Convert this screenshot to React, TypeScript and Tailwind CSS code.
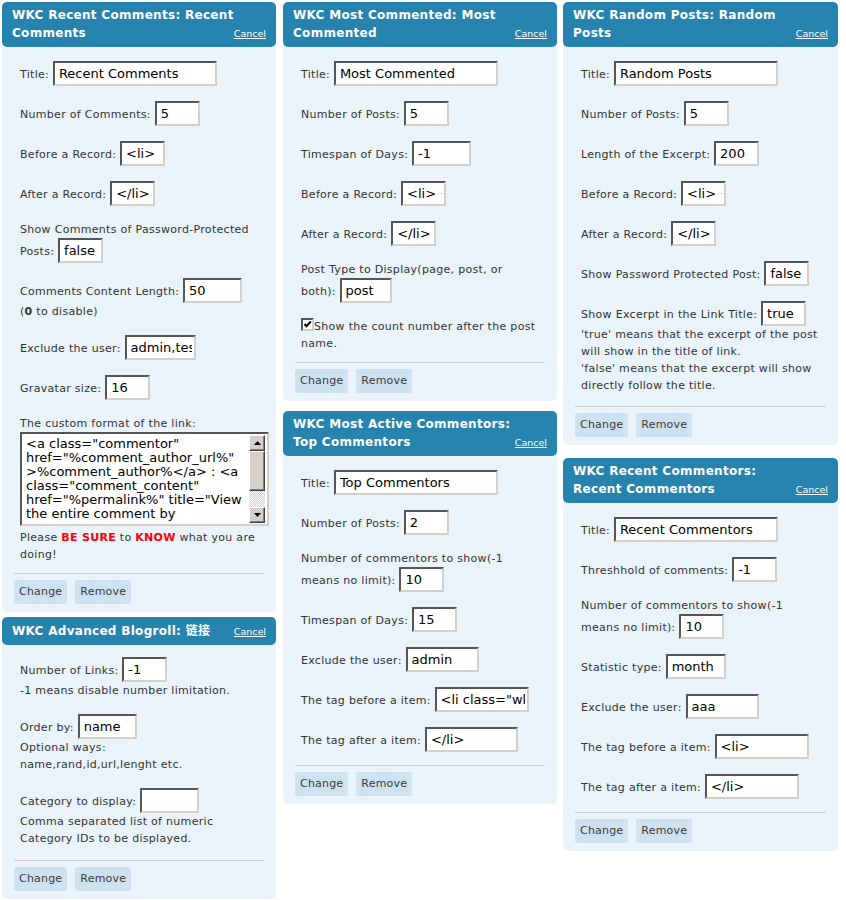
import React from "react";

function Inp({ w, v }: { w: string; v: string }) {
  return (
    <input
      readOnly
      value={v}
      className={`${w} h-[25px] border-2 border-solid border-t-[#555555] border-l-[#555555] border-r-[#d4d0c8] border-b-[#d4d0c8] bg-white pl-[4px] pr-[2px] text-[13px] tracking-normal text-black outline-none`}
    />
  );
}

function Btn({ children }: { children: React.ReactNode }) {
  return (
    <button className="h-[24px] px-[5px] rounded-[3px] bg-[#cee1ef] text-[11px] leading-[24px] tracking-[0.2px] text-[#3a3a3a]">
      {children}
    </button>
  );
}

function Arrow({ up }: { up?: boolean }) {
  return (
    <div className="h-[16px] flex items-center justify-center bg-[#d4d0c8] border border-solid border-t-white border-l-white border-r-[#404040] border-b-[#404040] shadow-[inset_-1px_-1px_#808080]">
      <svg width="7" height="4" viewBox="0 0 7 4">
        {up ? <path d="M3.5 0 L7 4 L0 4 Z" fill="#000" /> : <path d="M0 0 L7 0 L3.5 4 Z" fill="#000" />}
      </svg>
    </div>
  );
}

function FakeTextArea() {
  const text =
    '<a class="commentor"\nhref="%comment_author_url%"\n>%comment_author%</a> : <a\nclass="comment_content"\nhref="%permalink%" title="View\nthe entire comment by';
  return (
    <div className="w-[249px] h-[94px] flex bg-white border-2 border-solid border-t-[#555555] border-l-[#555555] border-r-[#d4d0c8] border-b-[#d4d0c8] mb-[3px]">
      <textarea
        readOnly
        wrap="off"
        value={text}
        className="flex-1 min-w-0 resize-none overflow-hidden whitespace-pre bg-white pl-[4px] pt-[3px] text-[13px] leading-[14px] tracking-normal text-black outline-none"
      />
      <div className="w-[16px] mr-[2px] my-[1px] flex flex-col shrink-0">
        <Arrow up />
        <div className="h-[40px] bg-[#d4d0c8] border border-solid border-t-white border-l-white border-r-[#404040] border-b-[#404040] shadow-[inset_-1px_-1px_#808080]" />
        <div className="flex-1 bg-[repeating-conic-gradient(#d4d0c8_0%_25%,#ffffff_0%_50%)] bg-[length:2px_2px]" />
        <Arrow />
      </div>
    </div>
  );
}

function CheckBox() {
  return (
    <span className="inline-block w-[13px] h-[13px] align-[-1px] bg-white border-2 border-solid border-t-[#555555] border-l-[#555555] border-r-[#d4d0c8] border-b-[#d4d0c8]">
      <svg width="9" height="9" viewBox="0 0 9 9" className="block">
        <path d="M1.5 4 L3.5 6.2 L7.8 1.5" stroke="#000" strokeWidth="2" fill="none" />
      </svg>
    </span>
  );
}

function Panel({
  title,
  children,
  dividerMt,
  bodyPt = "pt-[14px]",
  headerPad = "pt-[4px] pb-[5px]",
  extra = "",
}: {
  title: React.ReactNode;
  children: React.ReactNode;
  dividerMt: string;
  bodyPt?: string;
  headerPad?: string;
  extra?: string;
}) {
  return (
    <div className={`bg-[#eaf3fa] rounded-[5px] ${extra}`}>
      <div className={`bg-[#2683ae] rounded-[5px] px-[10px] ${headerPad} flex items-end justify-between text-white`}>
        <div className="font-bold text-[12px] leading-[18px] tracking-[0.3px] whitespace-nowrap">{title}</div>
        <a className="text-[9.5px] leading-[16px] underline cursor-pointer">Cancel</a>
      </div>
      <div className="px-[12px]">
        <div
          className={`pl-[6px] ${bodyPt} flex flex-col gap-[15px] text-[11px] leading-[17px] tracking-[0.3px] text-[#333333] whitespace-nowrap`}
        >
          {children}
        </div>
        <div className={`${dividerMt} border-t border-solid border-[#cdcdcd] pt-[6px] pb-[8px] flex gap-[8px]`}>
          <Btn>Change</Btn>
          <Btn>Remove</Btn>
        </div>
      </div>
    </div>
  );
}

const Red = ({ children }: { children: React.ReactNode }) => (
  <strong className="font-bold text-[#ff0000]">{children}</strong>
);

export default function App() {
  return (
    <div className="w-[846px] h-[900px] bg-white pl-[2px] pt-[2px] font-['DejaVu_Sans','Noto_Sans_CJK_SC',sans-serif] flex items-start gap-[6px] overflow-hidden">
      {/* Column 1 */}
      <div className="w-[274px] mr-[1px] flex flex-col">
        <Panel
          title={
            <>
              WKC Recent Comments: Recent
              <br />
              Comments
            </>
          }
          dividerMt="mt-[10px]"
        >
          <div>
            Title: <Inp w="w-[164px]" v="Recent Comments" />
          </div>
          <div>
            Number of Comments: <Inp w="w-[45px]" v="5" />
          </div>
          <div>
            Before a Record: <Inp w="w-[45px]" v="<li>" />
          </div>
          <div>
            After a Record: <Inp w="w-[45px]" v="</li>" />
          </div>
          <div>
            Show Comments of Password-Protected
            <br />
            Posts: <Inp w="w-[45px]" v="false" />
          </div>
          <div>
            Comments Content Length: <Inp w="w-[59px]" v="50" />
            <br />(<strong className="font-bold">0</strong> to disable)
          </div>
          <div>
            Exclude the user: <Inp w="w-[71px]" v="admin,test" />
          </div>
          <div>
            Gravatar size: <Inp w="w-[45px]" v="16" />
          </div>
          <div>
            The custom format of the link:
            <FakeTextArea />
            Please <Red>BE SURE</Red> to <Red>KNOW</Red> what you are
            <br />
            doing!
          </div>
        </Panel>

        <Panel
          extra="mt-[5px]"
          title={<>WKC Advanced Blogroll: 链接</>}
          headerPad="pt-[5px] pb-[5px]"
          bodyPt="pt-[12px]"
          dividerMt="mt-[13px]"
        >
          <div>
            Number of Links: <Inp w="w-[45px]" v="-1" />
            <br />
            -1 means disable number limitation.
          </div>
          <div>
            Order by: <Inp w="w-[59px]" v="name" />
            <br />
            Optional ways:
            <br />
            name,rand,id,url,lenght etc.
          </div>
          <div>
            Category to display: <Inp w="w-[59px]" v="" />
            <br />
            Comma separated list of numeric
            <br />
            Category IDs to be displayed.
          </div>
        </Panel>
      </div>

      {/* Column 2 */}
      <div className="w-[274px] flex flex-col">
        <Panel
          title={
            <>
              WKC Most Commented: Most
              <br />
              Commented
            </>
          }
          dividerMt="mt-[10px]"
        >
          <div>
            Title: <Inp w="w-[164px]" v="Most Commented" />
          </div>
          <div>
            Number of Posts: <Inp w="w-[45px]" v="5" />
          </div>
          <div>
            Timespan of Days: <Inp w="w-[59px]" v="-1" />
          </div>
          <div>
            Before a Record: <Inp w="w-[45px]" v="<li> +" />
          </div>
          <div>
            After a Record: <Inp w="w-[45px]" v="</li>" />
          </div>
          <div>
            Post Type to Display(page, post, or
            <br />
            both): <Inp w="w-[52px]" v="post" />
          </div>
          <div>
            <CheckBox />
            Show the count number after the post
            <br />
            name.
          </div>
        </Panel>

        <Panel
          extra="mt-[10px]"
          title={
            <>
              WKC Most Active Commentors:
              <br />
              Top Commentors
            </>
          }
          dividerMt="mt-[13px]"
        >
          <div>
            Title: <Inp w="w-[164px]" v="Top Commentors" />
          </div>
          <div>
            Number of Posts: <Inp w="w-[45px]" v="2" />
          </div>
          <div>
            Number of commentors to show(-1
            <br />
            means no limit): <Inp w="w-[45px]" v="10" />
          </div>
          <div>
            Timespan of Days: <Inp w="w-[45px]" v="15" />
          </div>
          <div>
            Exclude the user: <Inp w="w-[73px]" v="admin" />
          </div>
          <div>
            The tag before a item: <Inp w="w-[94px]" v={'<li class="wkc_most_active">'} />
          </div>
          <div>
            The tag after a item: <Inp w="w-[93px]" v="</li>" />
          </div>
        </Panel>
      </div>

      {/* Column 3 */}
      <div className="w-[275px] flex flex-col">
        <Panel
          title={
            <>
              WKC Random Posts: Random
              <br />
              Posts
            </>
          }
          dividerMt="mt-[12px]"
        >
          <div>
            Title: <Inp w="w-[164px]" v="Random Posts" />
          </div>
          <div>
            Number of Posts: <Inp w="w-[45px]" v="5" />
          </div>
          <div>
            Length of the Excerpt: <Inp w="w-[45px]" v="200" />
          </div>
          <div>
            Before a Record: <Inp w="w-[45px]" v="<li> +" />
          </div>
          <div>
            After a Record: <Inp w="w-[45px]" v="</li>" />
          </div>
          <div>
            Show Password Protected Post: <Inp w="w-[45px]" v="false" />
          </div>
          <div>
            Show Excerpt in the Link Title: <Inp w="w-[45px]" v="true" />
            <br />
            'true' means that the excerpt of the post
            <br />
            will show in the title of link.
            <br />
            'false' means that the excerpt will show
            <br />
            directly follow the title.
          </div>
        </Panel>

        <Panel
          extra="mt-[13px]"
          title={
            <>
              WKC Recent Commentors:
              <br />
              Recent Commentors
            </>
          }
          dividerMt="mt-[13px]"
        >
          <div>
            Title: <Inp w="w-[164px]" v="Recent Commentors" />
          </div>
          <div>
            Threshhold of comments: <Inp w="w-[45px]" v="-1" />
          </div>
          <div>
            Number of commentors to show(-1
            <br />
            means no limit): <Inp w="w-[45px]" v="10" />
          </div>
          <div>
            Statistic type: <Inp w="w-[60px]" v="month" />
          </div>
          <div>
            Exclude the user: <Inp w="w-[73px]" v="aaa" />
          </div>
          <div>
            The tag before a item: <Inp w="w-[94px]" v="<li>" />
          </div>
          <div>
            The tag after a item: <Inp w="w-[94px]" v="</li>" />
          </div>
        </Panel>
      </div>
    </div>
  );
}
